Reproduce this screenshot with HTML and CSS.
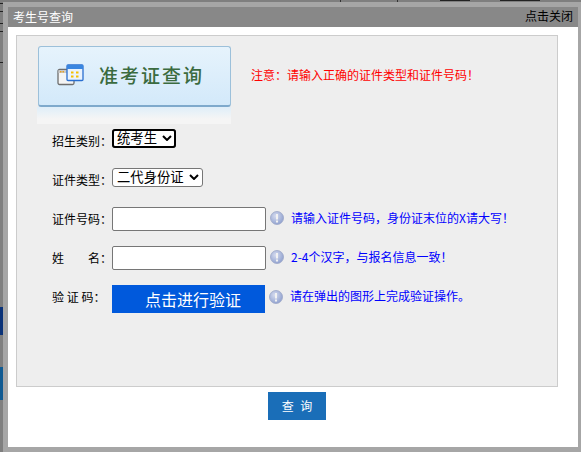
FILE: index.html
```html
<!DOCTYPE html>
<html lang="zh-CN">
<head>
<meta charset="utf-8">
<title>考生号查询</title>
<link rel="stylesheet" href="styles.css">
</head>
<body>
<svg class="backdrop" width="581" height="452" viewBox="0 0 581 452" aria-hidden="true">
  <rect x="0" y="3" width="3" height="1" fill="#222"/>
  <rect x="0" y="11" width="3" height="1" fill="#222"/>
  <rect x="0" y="23" width="3" height="1" fill="#222"/>
  <rect x="0" y="31" width="3" height="1" fill="#222"/>
  <rect x="0" y="62" width="3" height="1" fill="#222"/>
  <rect x="0" y="307" width="3" height="28" fill="#0a3278"/>
  <rect x="0" y="367" width="3" height="33" fill="#0f5a92"/>
  <rect x="340" y="0" width="1" height="2" fill="#333"/>
  <rect x="397" y="0" width="1" height="2" fill="#333"/>
  <rect x="440" y="0" width="30" height="1" fill="#222"/>
  <rect x="500" y="0" width="40" height="1" fill="#222"/>
</svg>
<div class="modal">
  <header class="title-bar">
    <span class="title">考生号查询</span>
    <span class="close">点击关闭</span>
  </header>
  <div class="content">
    <main class="panel">
      <div class="top">
        <div class="banner-wrap">
          <div class="banner">
            <svg class="banner-icon" width="27" height="22" viewBox="0 0 27 22">
              <rect x="1" y="5.500" width="16" height="15" rx="1.500" fill="#f4f4f4" stroke="#6e6e6e" stroke-width="1.300"/>
              <rect x="1.500" y="6" width="15" height="3" fill="#c9c9c9"/>
              <rect x="3" y="7" width="1.500" height="1.500" fill="#e8a020"/>
              <rect x="5.500" y="7" width="1.500" height="1.500" fill="#e8a020"/>
              <rect x="10" y="1" width="16" height="15.500" rx="1" fill="#eaf3fd" stroke="#2a6fd0" stroke-width="1.300"/>
              <rect x="10" y="1" width="16" height="4" fill="#3a86e0"/>
              <rect x="14" y="7.500" width="2.500" height="2" fill="#f5c000"/>
              <rect x="19" y="7.500" width="2.500" height="2" fill="#f5c000"/>
              <rect x="14" y="11.500" width="2.500" height="2" fill="#f5c000"/>
              <rect x="19" y="11.500" width="2.500" height="2" fill="#f5c000"/>
            </svg>
            <span class="banner-text">准考证查询</span>
          </div>
          <div class="reflection"></div>
        </div>
        <p class="note">注意：请输入正确的证件类型和证件号码！</p>
      </div>
      <form class="form">
        <div class="row row-select first">
          <label class="label">招生类别：</label>
          <span class="select-wrap">
            <select class="select select-short focused"><option>统考生</option></select>
            <svg class="chevron" width="10" height="6" viewBox="0 0 10 6"><path d="M1 1l4 4 4-4" fill="none" stroke="#000" stroke-width="2"/></svg>
          </span>
        </div>
        <div class="row row-select">
          <label class="label">证件类型：</label>
          <span class="select-wrap">
            <select class="select select-long"><option>二代身份证</option></select>
            <svg class="chevron" width="10" height="6" viewBox="0 0 10 6"><path d="M1 1l4 4 4-4" fill="none" stroke="#000" stroke-width="2"/></svg>
          </span>
        </div>
        <div class="row row-input">
          <label class="label">证件号码：</label>
          <input class="input" type="text">
          <svg class="info" width="14" height="14" viewBox="0 0 14 14"><use href="#info-icon"/></svg>
          <span class="help">请输入证件号码，身份证末位的X请大写！</span>
        </div>
        <div class="row row-input">
          <label class="label name-label"><span>姓</span><span>名：</span></label>
          <input class="input" type="text">
          <svg class="info" width="14" height="14" viewBox="0 0 14 14"><use href="#info-icon"/></svg>
          <span class="help">2-4个汉字，与报名信息一致！</span>
        </div>
        <div class="row row-captcha">
          <label class="label spaced">验 证 码：</label>
          <button class="verify" type="button">点击进行验证</button>
          <svg class="info" width="14" height="14" viewBox="0 0 14 14"><use href="#info-icon"/></svg>
          <span class="help">请在弹出的图形上完成验证操作。</span>
        </div>
      </form>
    </main>
    <div class="actions"><button class="query" type="button">查 询</button></div>
  </div>
</div>
<svg class="defs" width="0" height="0" aria-hidden="true">
  <defs>
    <radialGradient id="info-grad" cx="0.4" cy="0.35" r="0.7">
      <stop offset="0" stop-color="#d6dcef"/>
      <stop offset="1" stop-color="#8d9fce"/>
    </radialGradient>
    <g id="info-icon">
      <circle cx="7" cy="7" r="6.500" fill="url(#info-grad)" stroke="#9aa6c6" stroke-width="0.800"/>
      <rect x="6" y="3" width="2" height="5.500" fill="#f2f2f2"/>
      <rect x="6" y="9.500" width="2" height="2" fill="#f2f2f2"/>
    </g>
  </defs>
</svg>
</body>
</html>
```
FILE: styles.css
```css
* { box-sizing: border-box; }
html, body { margin: 0; height: 100%; }
body {
  width: 581px;
  height: 452px;
  overflow: hidden;
  background: #7f7f7f;
  padding: 2px 0 0 3px;
  font-family: "Noto Sans CJK SC", "Liberation Sans", sans-serif;
  font-size: 12px;
  color: #000;
  position: relative;
}
.backdrop { position: absolute; left: 0; top: 0; }
.defs { position: absolute; }
.modal {
  position: relative;
  width: 580px;
  height: 450px;
  border: 5px solid #a6a6a6;
  border-right-width: 5px;
  display: flex;
  flex-direction: column;
}
.title-bar {
  height: 20px;
  flex: none;
  background: #888;
  display: flex;
  justify-content: space-between;
  align-items: center;
  padding: 0 5px;
  line-height: 20px;
}
.title { color: #fff; font-size: 12px; }
.close { color: #000; font-size: 12px; margin-top: -3px; }
.content {
  flex: 1;
  background: #fff;
  padding: 8px 0 0 8px;
  display: flex;
  flex-direction: column;
}
.panel {
  height: 352px;
  flex: none;
  width: 542px;
  background: #eee;
  border: 1px solid #ccc;
  padding: 10px 0 0 20px;
}
.top { display: flex; align-items: flex-start; }
.banner-wrap { width: 194px; flex: none; }
.banner {
  height: 61px;
  margin-left: 1px;
  width: 193px;
  border: 1px solid #9cc0da;
  border-bottom: 2px solid #7ea9cc;
  border-radius: 3px;
  background: linear-gradient(#e6f3fc, #d3e9fa);
  display: flex;
  align-items: center;
  padding: 0 0 0 18px;
}
.banner-icon { flex: none; margin: -3px 15px 0 0; }
.banner-text {
  font-size: 19px;
  letter-spacing: 2px;
  color: #3b6b3f;
  font-weight: 500;
  line-height: 24px;
  margin-top: -2px;
}
.reflection {
  height: 17px;
  background: linear-gradient(#dfeef9, #f5f5f5 70%);
}
.note {
  margin: 21px 0 0 20px;
  color: #f00;
  font-size: 12px;
  line-height: 16px;
}
.row {
  display: flex;
  align-items: center;
  padding-left: 15px;
}
.label {
  width: 60px;
  flex: none;
  font-size: 12px;
  line-height: 16px;
}
.name-label { display: flex; justify-content: space-between; }
.row-select { height: 19px; margin-bottom: 20px; }
.row-select .label { margin-top: 5px; }
.first { margin-top: 5px; }
.select-wrap { position: relative; display: flex; }
.select {
  appearance: none;
  height: 19px;
  padding: 0 0 2px 4px;
  font-family: inherit;
  font-size: 13.333px;
  line-height: 15px;
  background: #fff;
  color: #000;
  border: 1px solid #767676;
  border-radius: 3px;
}
.select-short { width: 64px; }
.select-long { width: 91px; }
.focused { outline: 2px solid #000; outline-offset: -2px; }
.chevron { position: absolute; right: 4px; top: 6px; pointer-events: none; }
.row-input { height: 24px; margin-bottom: 15px; }
.input {
  width: 154px;
  height: 24px;
  flex: none;
  background: #fff;
  border: 1px solid #767676;
  border-radius: 2px;
  padding: 0;
}
.info { flex: none; margin: -2px 7px 0 4px; }
.help { color: #00f; font-size: 12px; line-height: 16px; margin-top: -3px; }
.row-captcha { height: 28px; }
.verify {
  width: 153px;
  height: 28px;
  flex: none;
  background: #0059dc;
  color: #fff;
  border: 0;
  padding: 0 0 0 9px;
  font-family: inherit;
  font-size: 16px;
}
.row-captcha .info { margin: -5px 7px 0 4px; }
.row-captcha .help { margin-top: -7px; }
.row-captcha .label { margin-top: -4px; }
.actions { display: flex; margin: 5px 0 0 252px; }
.query {
  width: 58px;
  height: 28px;
  background: #1a6eb8;
  color: #fff;
  border: 0;
  padding: 0 0 2px 2px;
  font-family: inherit;
  font-size: 12px;
  letter-spacing: 2px;
}
```
